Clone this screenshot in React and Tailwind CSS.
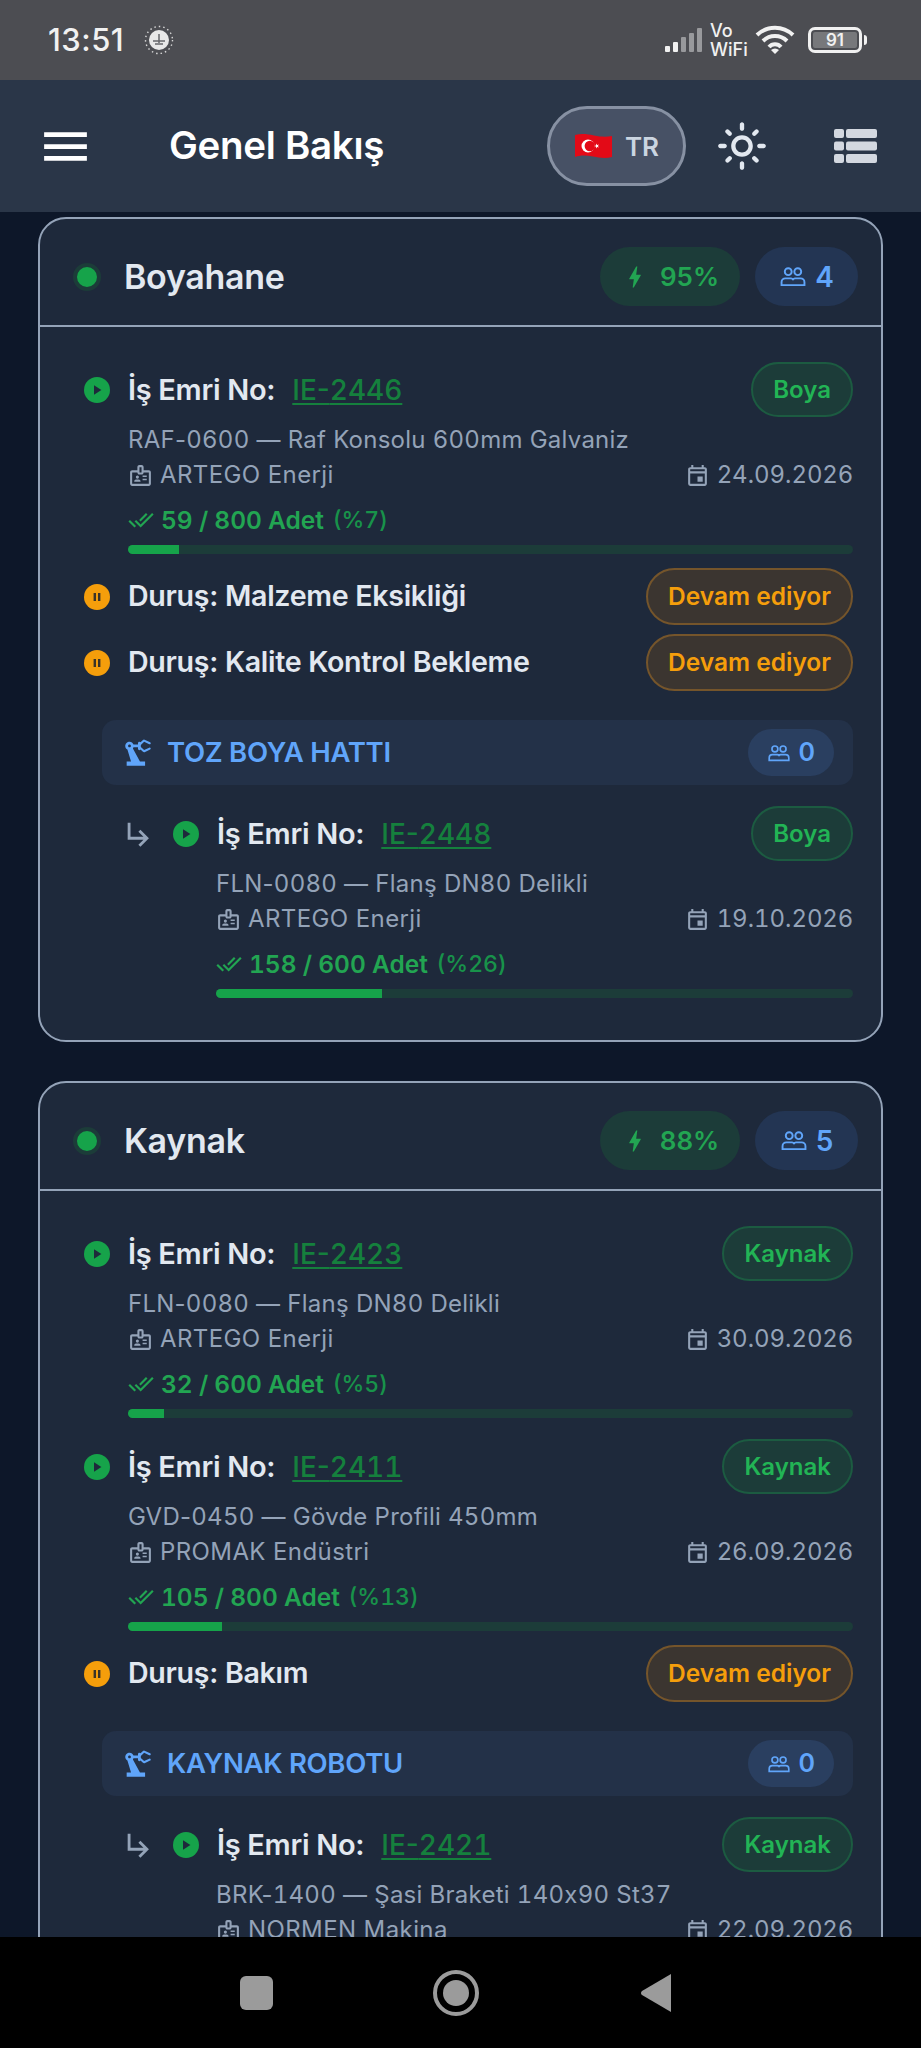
import {
  MdBolt,
  MdDoneAll,
  MdMenu,
  MdOutlineBadge,
  MdOutlineEvent,
  MdOutlineLightMode,
  MdPrecisionManufacturing,
  MdSubdirectoryArrowRight,
} from "react-icons/md";

const departments = [
  {
    name: "Boyahane",
    oee: "95%",
    people: 4,
    items: [
      { type: "job", no: "IE-2446", chip: "Boya", product: "RAF-0600 — Raf Konsolu 600mm Galvaniz", company: "ARTEGO Enerji", date: "24.09.2026", done: "59 / 800 Adet", pct: 7 },
      { type: "stop", label: "Duruş: Malzeme Eksikliği" },
      { type: "stop", label: "Duruş: Kalite Kontrol Bekleme" },
      { type: "line", label: "TOZ BOYA HATTI", people: 0 },
      { type: "job", nested: true, no: "IE-2448", chip: "Boya", product: "FLN-0080 — Flanş DN80 Delikli", company: "ARTEGO Enerji", date: "19.10.2026", done: "158 / 600 Adet", pct: 26 },
    ],
  },
  {
    name: "Kaynak",
    oee: "88%",
    people: 5,
    items: [
      { type: "job", no: "IE-2423", chip: "Kaynak", product: "FLN-0080 — Flanş DN80 Delikli", company: "ARTEGO Enerji", date: "30.09.2026", done: "32 / 600 Adet", pct: 5 },
      { type: "job", no: "IE-2411", chip: "Kaynak", product: "GVD-0450 — Gövde Profili 450mm", company: "PROMAK Endüstri", date: "26.09.2026", done: "105 / 800 Adet", pct: 13 },
      { type: "stop", label: "Duruş: Bakım" },
      { type: "line", label: "KAYNAK ROBOTU", people: 0 },
      { type: "job", nested: true, no: "IE-2421", chip: "Kaynak", product: "BRK-1400 — Şasi Braketi 140x90 St37", company: "NORMEN Makina", date: "22.09.2026" },
    ],
  },
];

// only the digits go tabular, Inter's tnum also widens hyphens and dots
function Num({ text }) {
  return String(text)
    .split(/(\d+)/)
    .map((part, i) => (i % 2 ? <span key={i} className="tabular-nums">{part}</span> : part));
}

function PeopleIcon({ className }) {
  return (
    <svg viewBox="0 0 28 22" fill="none" stroke="currentColor" strokeWidth="2" className={className}>
      <circle cx="9" cy="6" r="3.6" />
      <circle cx="19" cy="6" r="3.6" />
      <path d="M2 20v-3a4 4 0 0 1 4-4h6a3 3 0 0 1 2 1 3 3 0 0 1 2-1h6a4 4 0 0 1 4 4v3z" />
    </svg>
  );
}

function PlayIcon() {
  return (
    <svg viewBox="0 0 26 26" className="h-[26px] w-[26px] shrink-0">
      <circle cx="13" cy="13" r="13" fill="#16a34a" />
      <path d="M10 8.2v9.6l7.4-4.8z" fill="#1e293b" />
    </svg>
  );
}

function PauseIcon() {
  return (
    <svg viewBox="0 0 26 26" className="h-[26px] w-[26px] shrink-0">
      <circle cx="13" cy="13" r="13" fill="#f59e0b" />
      <path d="M9.6 9h2.4v8H9.6zM14 9h2.4v8H14z" fill="#3a3328" />
    </svg>
  );
}

function Job({ job }) {
  return (
    <div>
      <div className="flex h-[55px] items-center">
        {job.nested && <MdSubdirectoryArrowRight className="ml-[38px] mr-[17px] h-[34px] w-[34px] shrink-0 text-[#94a3b8]" />}
        <PlayIcon />
        <span className="ml-[18px] text-[29px] font-semibold tracking-[-0.3px] text-[#e2e8f0]">İş Emri No:</span>
        <span className="ml-[17px] text-[28px] font-medium text-[#15803d] underline underline-offset-[3px]"><Num text={job.no} /></span>
        <span className="ml-auto flex h-[55px] items-center rounded-full border-2 border-[#1c5b41] bg-[#1c3c39] px-[20px] text-[24px] font-semibold text-[#22b455]">
          {job.chip}
        </span>
      </div>
      <div className={job.nested ? "ml-[132px]" : "ml-[44px]"}>
        <p className="mt-[7px] text-[24px] leading-[32px] tracking-[0.25px] text-[#94a3b8]"><Num text={job.product} /></p>
        <div className="mt-[3px] flex items-center justify-between text-[24px] leading-[32px] text-[#94a3b8]">
          <span className="flex items-center gap-[7px] tracking-[0.4px]">
            <MdOutlineBadge className="h-[25px] w-[25px]" />
            {job.company}
          </span>
          <span className="flex items-center gap-[7px] tracking-[-0.2px]">
            <MdOutlineEvent className="h-[25px] w-[25px]" />
            <span><Num text={job.date} /></span>
          </span>
        </div>
        {job.done && (
          <>
            <div className="mt-[13px] flex items-center leading-[32px] text-[#22a552]">
              <MdDoneAll className="mr-[7px] h-[26px] w-[26px]" />
              <span className="text-[24.500px] font-semibold"><Num text={job.done} /></span>
              <span className="ml-[9px] text-[23px] font-medium text-[#18924a]">(%<Num text={job.pct} />)</span>
            </div>
            <div className="mt-[9px] h-[9px] overflow-hidden rounded-full bg-[#1c3c39]">
              <div className="h-full bg-[#16a34a]" style={{ width: `${job.pct}%` }} />
            </div>
          </>
        )}
      </div>
    </div>
  );
}

function Stop({ label }) {
  return (
    <div className="flex h-[57px] items-center">
      <PauseIcon />
      <span className="ml-[18px] text-[28.600px] font-semibold tracking-[-0.3px] text-[#e2e8f0]">{label}</span>
      <span className="ml-auto flex h-[57px] items-center rounded-full border-2 border-[#75552b] bg-[#3b3530] px-[20px] text-[24.500px] font-semibold text-[#f59e0b]">
        Devam ediyor
      </span>
    </div>
  );
}

function Line({ label, people }) {
  return (
    <div className="ml-[18px] flex h-[65px] items-center rounded-[14px] bg-[#233148] pl-[19px] pr-[19px] text-[#60a5fa]">
      <MdPrecisionManufacturing className="h-[34px] w-[34px]" />
      <span className="ml-[12px] text-[27.500px] font-semibold tracking-[-0.3px]">{label}</span>
      <span className="ml-auto flex h-[47px] items-center gap-[8px] rounded-full bg-[#2a3f60] px-[19px] text-[25px] font-semibold">
        <PeopleIcon className="h-[18px] w-[24px]" />
        {people}
      </span>
    </div>
  );
}

// spacing between rows depends on which kinds of row meet
function gapBefore(prev, item) {
  if (!prev) return "";
  if (item.type === "job") return "mt-[21px]";
  if (item.type === "line") return "mt-[29px]";
  if (prev.type === "stop") return "mt-[9px]";
  return "mt-[14px]";
}

function Card({ dept }) {
  return (
    <section className="shrink-0 overflow-hidden rounded-[28px] border-2 border-[#94a3b8] bg-[#1e293b]">
      <div className="flex h-[108px] items-center border-b-2 border-[#94a3b8] pl-[33px] pr-[23px] pt-[9px]">
        <span className="h-[28px] w-[28px] rounded-full border-4 border-[#1c3c39] bg-[#16a34a]" />
        <span className="ml-[23px] text-[34px] font-semibold tracking-[-0.3px] text-[#e2e8f0]">{dept.name}</span>
        <span className="ml-auto flex h-[59px] w-[140px] items-center justify-center gap-[11px] rounded-full bg-[#1c3c39] text-[26px] font-semibold text-[#22a552]">
          <MdBolt className="h-[28px] w-[28px]" />
          {dept.oee}
        </span>
        <span className="ml-[15px] flex h-[59px] w-[103px] items-center justify-center gap-[8px] rounded-full bg-[#233553] text-[28px] font-semibold text-[#60a5fa]">
          <PeopleIcon className="h-[21px] w-[28px]" />
          {dept.people}
        </span>
      </div>
      <div className="pb-[42px] pl-[44px] pr-[28px] pt-[35px]">
        {dept.items.map((item, i) => {
          const cls = gapBefore(dept.items[i - 1], item);
          return (
            <div key={i} className={cls}>
              {item.type === "job" && <Job job={item} />}
              {item.type === "stop" && <Stop label={item.label} />}
              {item.type === "line" && <Line label={item.label} people={item.people} />}
            </div>
          );
        })}
      </div>
    </section>
  );
}

function StatusBar() {
  return (
    <div className="flex h-[80px] shrink-0 items-center bg-[#4c4d52] pl-[48px] pr-[54px] text-[#f1f1f1]">
      <span className="text-[31px] font-medium tracking-[0.5px]">13:51</span>
      <svg viewBox="0 0 30 30" className="ml-[20px] h-[30px] w-[30px]">
        <circle cx="15" cy="15" r="13.5" fill="none" stroke="#d8d8d8" strokeWidth="1.4" strokeDasharray="1.5 3" />
        <circle cx="15" cy="15" r="10" fill="#e8e8e8" />
        <path d="M9 16h12M15 9v9M11 19h8" stroke="#66676b" strokeWidth="1.5" fill="none" />
      </svg>
      <div className="ml-auto flex items-center">
        <svg viewBox="0 0 38 26" className="h-[26px] w-[38px]">
          <rect x="0" y="19" width="5" height="6" rx="1" fill="#f1f1f1" />
          <rect x="8" y="15" width="5" height="10" rx="1" fill="#f1f1f1" />
          <rect x="16" y="10" width="5" height="15" rx="1" fill="#98999c" />
          <rect x="24" y="6" width="5" height="19" rx="1" fill="#98999c" />
          <rect x="32" y="1" width="5" height="24" rx="1" fill="#98999c" />
        </svg>
        <div className="ml-[7px] flex w-[38px] flex-col text-[18px] font-medium leading-[19px]">
          <span>Vo</span>
          <span>WiFi</span>
        </div>
        <svg viewBox="0 0 40 32" fill="none" stroke="#f1f1f1" strokeWidth="4" className="ml-[7px] h-[32px] w-[40px]">
          <path d="M2 11a26 26 0 0 1 36 0" />
          <path d="M8 17a17 17 0 0 1 24 0" />
          <path d="M14 23a8 8 0 0 1 12 0" />
          <path d="M20 30l-4-4a6 6 0 0 1 8 0z" fill="#f1f1f1" stroke="none" />
        </svg>
        <div className="ml-[13px] flex items-center">
          <span className="flex h-[26px] w-[54px] items-center justify-center rounded-[7px] border-[3px] border-[#f1f1f1] p-[2px]">
            <span className="flex h-full w-full items-center justify-center rounded-[2px] bg-[#77787b] text-[17px] font-semibold leading-none">91</span>
          </span>
          <span className="ml-[2px] h-[10px] w-[3px] rounded-r-sm bg-[#f1f1f1]" />
        </div>
      </div>
    </div>
  );
}

function Header() {
  return (
    <header className="flex h-[132px] shrink-0 items-center bg-[#2a3648] pl-[37px] pr-[44px] text-white">
      <MdMenu className="h-[57px] w-[57px]" />
      <h1 className="ml-[75px] text-[38.500px] font-semibold tracking-[-0.3px]">Genel Bakış</h1>
      <button className="ml-auto flex h-[80px] w-[139px] items-center justify-center gap-[12px] rounded-full border-[3px] border-[#8791a3] bg-[#475165]">
        <svg viewBox="0 0 39 26" className="h-[26px] w-[39px]">
          <path d="M1 2c6-1.500 12-1 19 .5s13 1.500 18 .5v21c-6 1.500-12 1-19-.5S6 22 1 24z" fill="#e30a17" />
          <circle cx="14" cy="13" r="6.500" fill="#fff" />
          <circle cx="15.800" cy="13" r="5.200" fill="#e30a17" />
          <path d="M20 13l5-1.600-3 4.200v-5.200l3 4.200z" fill="#fff" />
        </svg>
        <span className="text-[26px] font-semibold text-[#cbd5e1]">TR</span>
      </button>
      <MdOutlineLightMode className="ml-[30px] h-[52px] w-[52px] text-[#e2e8f0]" />
      <svg viewBox="0 0 43 34" fill="#d3d8e0" className="ml-[66px] h-[34px] w-[43px]">
        <rect x="0" y="0" width="10" height="9" rx="2" />
        <rect x="12" y="0" width="31" height="9" rx="2" />
        <rect x="0" y="12.500" width="10" height="9" rx="2" />
        <rect x="12" y="12.500" width="31" height="9" rx="2" />
        <rect x="0" y="25" width="10" height="9" rx="2" />
        <rect x="12" y="25" width="31" height="9" rx="2" />
      </svg>
    </header>
  );
}

function NavBar() {
  return (
    <div className="flex h-[111px] shrink-0 items-center bg-black">
      <span className="ml-[240px] h-[34px] w-[33px] rounded-[6px] bg-[#9b9b9b]" />
      <svg viewBox="0 0 46 46" className="ml-[160px] h-[46px] w-[46px]">
        <circle cx="23" cy="23" r="21" fill="none" stroke="#9b9b9b" strokeWidth="4" />
        <circle cx="23" cy="23" r="13" fill="#9b9b9b" />
      </svg>
      <svg viewBox="0 0 32 40" className="ml-[161px] h-[40px] w-[32px]">
        <path d="M31 1v38L2 22a2.500 2.500 0 0 1 0-4z" fill="#9b9b9b" />
      </svg>
    </div>
  );
}

export default function App() {
  return (
    <div className="flex h-[2048px] w-[921px] flex-col overflow-hidden bg-[#0d1729] font-['Inter',sans-serif]">
      <StatusBar />
      <Header />
      <main className="flex min-h-0 flex-1 flex-col gap-[39px] overflow-hidden px-[38px] pt-[5px]">
        {departments.map((d) => (
          <Card key={d.name} dept={d} />
        ))}
      </main>
      <NavBar />
    </div>
  );
}
